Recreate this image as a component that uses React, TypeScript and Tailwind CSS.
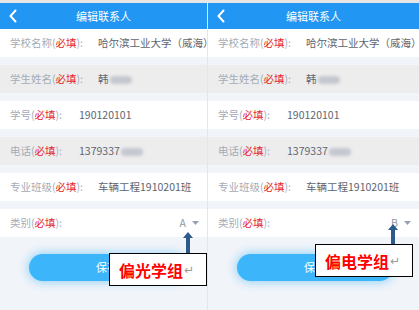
import React from 'react';

const FONT = { fontFamily: '"Noto Sans CJK SC", "Noto Sans", sans-serif' };

interface RowProps {
  label: string;
  value?: React.ReactNode;
  grey?: boolean;
  gap?: string;
}

const Row: React.FC<RowProps> = ({ label, value, grey, gap = 'gap-[15px]' }) => (
  <div
    className={`flex h-[28px] items-center ${gap} whitespace-nowrap overflow-hidden pl-[10px] text-[10.5px] ${
      grey ? 'bg-[#ededed]' : 'bg-white'
    }`}
  >
    <span className="text-[#a4acb8] shrink-0">
      {label}(<span className="text-[#e5262b]">必填</span>):
    </span>
    <span className="text-[#5d6670]">{value}</span>
  </div>
);

const Blur: React.FC<{ w: string }> = ({ w }) => (
  <span className={`inline-block h-[8px] ${w} rounded-sm bg-[#c4c8cf] blur-[1.5px] align-middle ml-[1px]`} />
);

interface PanelProps {
  category: string;
  note: string;
  width: string;
  arrowTop: string;
  boxTop: string;
  boxLeft: string;
  arrowLeft: string;
}

const Panel: React.FC<PanelProps> = ({ category, note, width, arrowTop, boxTop, boxLeft, arrowLeft }) => (
  <div className={`relative ${width} h-[310px] bg-[#f1f4f9] overflow-hidden`} style={FONT}>
    <div className="h-[3px] bg-[#e6e6e6]" />
    <div className="relative flex h-[26px] items-center justify-center bg-[#2196f3]">
      <svg className="absolute left-[8px] top-[6px]" width="10" height="14" viewBox="0 0 10 14">
        <path d="M7.5 1.5 L2.5 7 L7.5 12.5" fill="none" stroke="white" strokeWidth="2" strokeLinecap="round" strokeLinejoin="round" />
      </svg>
      <span className="text-[11px] text-white">编辑联系人</span>
    </div>
    <div className="flex flex-col gap-[8px]">
      <Row label="学校名称" value="哈尔滨工业大学（威海）" />
      <Row label="学生姓名" value={<>韩<Blur w="w-[22px]" /></>} grey />
      <Row label="学号" value="190120101" gap="gap-[17px]" />
      <Row label="电话" value={<>1379337<Blur w="w-[22px]" /></>} grey gap="gap-[17px]" />
      <Row label="专业班级" value="车辆工程1910201班" />
      <div className="flex h-[28px] items-center justify-between bg-white pl-[10px] pr-[8px] text-[10.5px]">
        <span className="text-[#a4acb8]">
          类别(<span className="text-[#e5262b]">必填</span>):
        </span>
        <span className="flex items-center gap-[6px] text-[#8f98a3]">
          {category}
          <svg width="7" height="4" viewBox="0 0 7 4">
            <path d="M0 0 H7 L3.5 4 Z" fill="#9aa2ad" />
          </svg>
        </span>
      </div>
    </div>
    <div className="mt-[17px] flex pl-[29px]">
      <div className="flex h-[27px] w-[156px] items-center justify-center rounded-full bg-[#3db5fb] text-[11px] text-white shadow-[0_0_8px_2px_rgba(61,181,251,0.45)]">
        保存
      </div>
    </div>

    {/* annotation overlay */}
    <div className={`absolute ${arrowLeft} ${arrowTop} flex flex-col items-center`}>
      <svg width="10" height="22" viewBox="0 0 10 22">
        <path d="M5 0 L10 6 L7 6 L7 22 L3 22 L3 6 L0 6 Z" fill="#2d5a8c" />
      </svg>
    </div>
    <div
      className={`absolute ${boxLeft} ${boxTop} flex h-[33px] w-[98px] items-center border border-black bg-white pl-[9px]`}
    >
      <span className="text-[16px] font-bold leading-none text-[#ff0000]" style={{ fontFamily: '"Noto Sans CJK SC", serif' }}>
        {note}
      </span>
      <span className="ml-[1px] text-[12px] leading-none text-[#9a9a9a]" style={{ fontFamily: '"DejaVu Sans", sans-serif' }}>
        ↵
      </span>
    </div>
  </div>
);

export default function App() {
  return (
    <div className="flex h-[310px] w-[419px] gap-[1px] overflow-hidden bg-[#e6e6e6]">
      <Panel
        category="A"
        note="偏光学组"
        width="w-[207px]"
        arrowLeft="left-[183px]"
        arrowTop="top-[232px]"
        boxLeft="left-[109px]"
        boxTop="top-[253px]"
      />
      <Panel
        category="B"
        note="偏电学组"
        width="w-[211px]"
        arrowLeft="left-[180px]"
        arrowTop="top-[224px]"
        boxLeft="left-[107px]"
        boxTop="top-[244px]"
      />
    </div>
  );
}
